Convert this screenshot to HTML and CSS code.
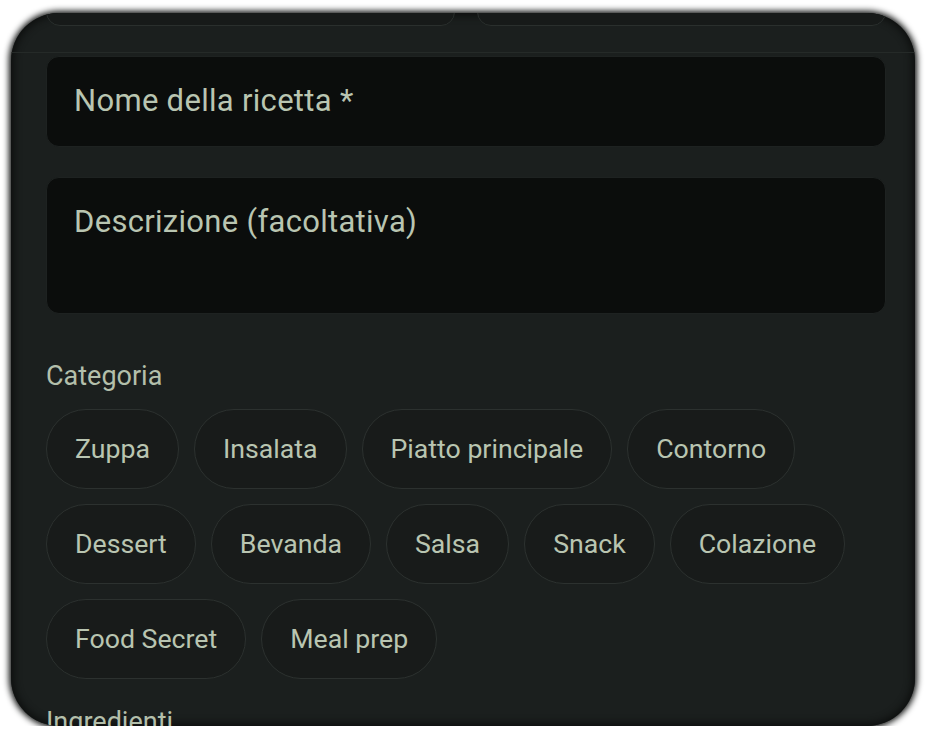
FILE: index.html
```html
<!DOCTYPE html>
<html lang="it">
<head>
<meta charset="utf-8">
<title>Nuova ricetta</title>
<link rel="stylesheet" href="styles.css">
</head>
<body>
<div class="card">
  <div class="top-row">
    <div class="top-field"></div>
    <div class="top-field"></div>
  </div>
  <div class="divider"></div>
  <div class="content">
    <div class="field field-name">Nome della ricetta *</div>
    <div class="field field-desc">Descrizione (facoltativa)</div>
    <div class="label label-cat">Categoria</div>
    <div class="chips">
      <span class="chip">Zuppa</span>
      <span class="chip">Insalata</span>
      <span class="chip">Piatto principale</span>
      <span class="chip">Contorno</span>
      <span class="chip">Dessert</span>
      <span class="chip">Bevanda</span>
      <span class="chip">Salsa</span>
      <span class="chip">Snack</span>
      <span class="chip">Colazione</span>
      <span class="chip">Food Secret</span>
      <span class="chip">Meal prep</span>
    </div>
    <div class="label label-ing">Ingredienti</div>
  </div>
</div>
</body>
</html>
```
FILE: styles.css
```css
html, body {
  margin: 0;
  padding: 0;
  background: #ffffff;
}
body {
  font-family: Roboto, "Liberation Sans", sans-serif;
  padding: 13px 17px 0 11px;
}
.card {
  height: 713px;
  background: #1b1f1e;
  border-radius: 48px;
  overflow: hidden;
  box-shadow: 0 0 6px 2px #0c0e0d, inset 0 0 7px 3px #0e100f;
}
.top-row {
  display: flex;
  gap: 22px;
  height: 13px;
  align-items: flex-end;
  padding: 0 29px 0 35px;
}
.top-field {
  flex: 1;
  height: 80px;
  flex-shrink: 0;
  border: 1px solid #2a2f2d;
  border-radius: 14px;
  background: #171a19;
}
.divider {
  margin-top: 26px;
  height: 1px;
  background: #252a28;
}
.content {
  padding: 3px 29px 0 35px;
  color: #b8c4b0;
}
.field {
  box-sizing: border-box;
  background: #0b0d0c;
  border: 1px solid #1e2221;
  border-radius: 13px;
  padding: 26px 27px 0;
  font-size: 31px;
  letter-spacing: 0.3px;
  line-height: 36px;
  color: #b9c5b1;
}
.field-name {
  height: 91px;
}
.field-desc {
  height: 137px;
  margin-top: 30px;
}
.label {
  font-size: 27px;
  line-height: 30px;
  color: #b3bfab;
}
.label-cat {
  margin-top: 47px;
}
.chips {
  display: flex;
  flex-wrap: wrap;
  gap: 15px;
  margin-top: 18px;
}
.chip {
  box-sizing: border-box;
  height: 80px;
  display: inline-flex;
  align-items: center;
  padding: 0 28px;
  border: 1px solid #2c312f;
  border-radius: 40px;
  background: #181b1a;
  font-size: 26.7px;
  color: #b9c5b1;
}
.label-ing {
  margin-top: 28px;
}
```
